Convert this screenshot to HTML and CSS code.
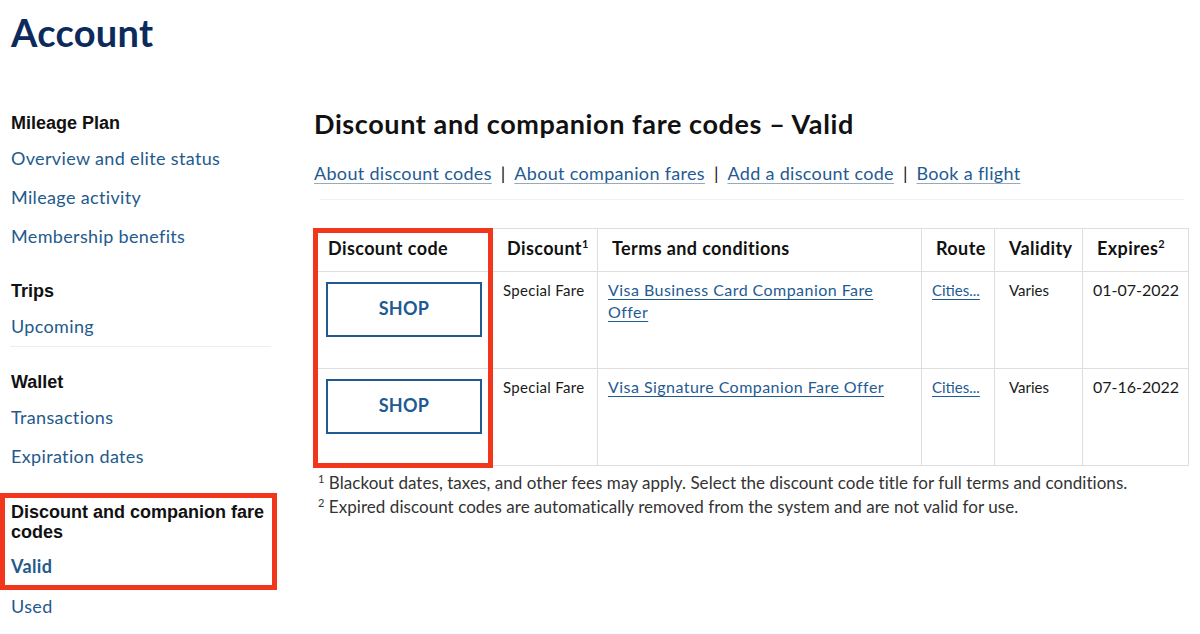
FILE: index.html
```html
<!DOCTYPE html>
<html lang="en">
<head>
<meta charset="utf-8">
<title>Account</title>
<link rel="stylesheet" href="styles.css">
</head>
<body>
<div class="page">
  <h1 class="page-title">Account</h1>
  <div class="layout">
    <nav class="sidebar">
      <div class="nav-group">
        <div class="nav-title">Mileage Plan</div>
        <a class="nav-link" href="#">Overview and elite status</a>
        <a class="nav-link" href="#">Mileage activity</a>
        <a class="nav-link" href="#">Membership benefits</a>
      </div>
      <div class="nav-group nav-group-ruled">
        <div class="nav-title">Trips</div>
        <a class="nav-link" href="#">Upcoming</a>
      </div>
      <div class="nav-group">
        <div class="nav-title">Wallet</div>
        <a class="nav-link" href="#">Transactions</a>
        <a class="nav-link" href="#">Expiration dates</a>
      </div>
      <div class="nav-group nav-group-highlight">
        <div class="nav-title">Discount and companion fare codes</div>
        <a class="nav-link nav-link-active" href="#">Valid</a>
      </div>
      <a class="nav-link nav-link-after" href="#">Used</a>
    </nav>
    <main class="content">
      <h2 class="content-title">Discount and companion fare codes – Valid</h2>
      <div class="quick-links">
        <a href="#">About discount codes</a><span class="sep">|</span><a href="#">About companion fares</a><span class="sep">|</span><a href="#">Add a discount code</a><span class="sep">|</span><a href="#">Book a flight</a>
      </div>
      <div class="rule"></div>
      <div class="table-wrap">
        <table class="codes">
          <colgroup>
            <col class="c1"><col class="c2"><col class="c3"><col class="c4"><col class="c5"><col class="c6">
          </colgroup>
          <thead>
            <tr>
              <th>Discount code</th>
              <th>Discount<sup>1</sup></th>
              <th>Terms and conditions</th>
              <th>Route</th>
              <th>Validity</th>
              <th>Expires<sup>2</sup></th>
            </tr>
          </thead>
          <tbody>
            <tr>
              <td class="btn-cell"><a class="shop-btn" href="#">SHOP</a></td>
              <td class="small">Special Fare</td>
              <td class="terms"><a class="tlink" href="#">Visa Business Card Companion Fare Offer</a></td>
              <td><a class="tlink route" href="#">Cities...</a></td>
              <td class="small validity">Varies</td>
              <td>01-07-2022</td>
            </tr>
            <tr>
              <td class="btn-cell"><a class="shop-btn" href="#">SHOP</a></td>
              <td class="small">Special Fare</td>
              <td class="terms"><a class="tlink" href="#">Visa Signature Companion Fare Offer</a></td>
              <td><a class="tlink route" href="#">Cities...</a></td>
              <td class="small validity">Varies</td>
              <td>07-16-2022</td>
            </tr>
          </tbody>
        </table>
        <div class="col-highlight"></div>
      </div>
      <div class="notes">
        <p><sup>1</sup> Blackout dates, taxes, and other fees may apply. Select the discount code title for full terms and conditions.</p>
        <p><sup>2</sup> Expired discount codes are automatically removed from the system and are not valid for use.</p>
      </div>
    </main>
  </div>
</div>
</body>
</html>
```
FILE: styles.css
```css
* { box-sizing: border-box; }
html, body { margin: 0; padding: 0; background: #fff; }
body {
  font-family: Lato, "Open Sans", "Liberation Sans", sans-serif;
  color: #151515;
  width: 1200px;
  height: 634px;
  overflow: hidden;
}
a { color: #1f5b93; text-decoration: none; }

.page-title {
  margin: 0;
  padding: 14px 0 0 11px;
  font-size: 38px;
  line-height: 36px;
  font-weight: 700;
  color: #0c2b5c;
  letter-spacing: 0.3px;
}

.layout {
  display: grid;
  grid-template-columns: 277px 875px;
  column-gap: 37px;
  margin-top: 63px;
}

/* Sidebar */
.sidebar { display: flex; flex-direction: column; }
.nav-group { display: flex; flex-direction: column; padding-left: 11px; }
.nav-group + .nav-group { margin-top: 25px; }
.nav-title {
  font-family: "Liberation Sans", Arial, sans-serif;
  font-weight: 700;
  font-size: 18px;
  line-height: 20px;
  color: #111;
  margin-bottom: 6px;
}
.nav-link {
  display: block;
  font-size: 18px;
  line-height: 39px;
  height: 39px;
  color: #235a8c;
  letter-spacing: 0.35px;
}
.nav-group-ruled {
  margin-right: 6px;
  margin-left: 10px;
  padding-left: 1px;
  border-bottom: 1px solid #eeeeee;
}
.nav-group.nav-group-highlight {
  margin-top: 17px;
  padding: 4px 6px 0 6px;
  border: 5px solid #f2361c;
}
.nav-link-active { font-weight: 700; height: 37px; line-height: 37px; }
.nav-link-after { padding-left: 11px; margin-top: -3px; }

/* Main */
.content { min-width: 0; }
.content-title {
  margin: -4px 0 0;
  font-size: 27px;
  line-height: 30px;
  font-weight: 700;
  color: #111;
  letter-spacing: 0.6px;
  white-space: nowrap;
}
.quick-links {
  margin-top: 22px;
  font-size: 18px;
  line-height: 24px;
  letter-spacing: 0.32px;
  white-space: nowrap;
}
.quick-links a {
  text-decoration: underline;
  text-decoration-color: #9aa9b8;
  text-underline-offset: 3px;
}
.sep { margin: 0 9px; color: #111; letter-spacing: 0; }
.rule {
  margin: 14px 5px 0 6px;
  border-top: 1px solid #f2f2f2;
}

.table-wrap { position: relative; margin-top: 28px; width: 875px; margin-left: -1px; }
.codes {
  border-collapse: collapse;
  table-layout: fixed;
  width: 875px;
}
.c1 { width: 179px; } .c2 { width: 105px; } .c3 { width: 324px; }
.c4 { width: 73px; } .c5 { width: 88px; } .c6 { width: 106px; }
.codes th, .codes td { border: 1px solid #dedede; vertical-align: top; text-align: left; }
.codes th {
  height: 43px;
  padding: 8px 0 0 14px;
  font-size: 18px;
  font-weight: 700;
  line-height: 22px;
  color: #111;
  white-space: nowrap;
  letter-spacing: 0.4px;
}
.codes th sup { font-size: 11px; line-height: 0; vertical-align: 7px; letter-spacing: 0; }
.codes td {
  height: 97px;
  padding: 7px 6px 0 10px;
  font-size: 16px;
  line-height: 22px;
  color: #1a1a1a;
}
.codes td.small { font-size: 15px; letter-spacing: 0.3px; }
.codes td.validity { padding-left: 14px; letter-spacing: 0; }
.codes td.terms { padding-right: 14px; }
.codes td.btn-cell { padding: 10px 0 0 12px; }
.shop-btn {
  display: flex;
  align-items: center;
  justify-content: center;
  width: 156px;
  height: 55px;
  border: 2px solid #205a92;
  color: #205a92;
  font-weight: 700;
  font-size: 18px;
  letter-spacing: 0.3px;
  padding-bottom: 4px;
}
.tlink {
  text-decoration: underline;
  text-underline-offset: 3px;
  color: #1f5b93;
  letter-spacing: 0.45px;
}
.tlink.route { font-size: 15px; letter-spacing: 0; }
.col-highlight {
  position: absolute;
  left: 0;
  top: 0;
  width: 180px;
  height: 240px;
  border: 5px solid #f2361c;
  pointer-events: none;
}

.notes { margin-top: 5px; padding-left: 4px; }
.notes p {
  margin: 0;
  font-size: 17px;
  line-height: 24px;
  color: #333;
  letter-spacing: 0.05px;
  white-space: nowrap;
}
.notes sup { font-size: 11px; vertical-align: 6px; line-height: 0; }
```
